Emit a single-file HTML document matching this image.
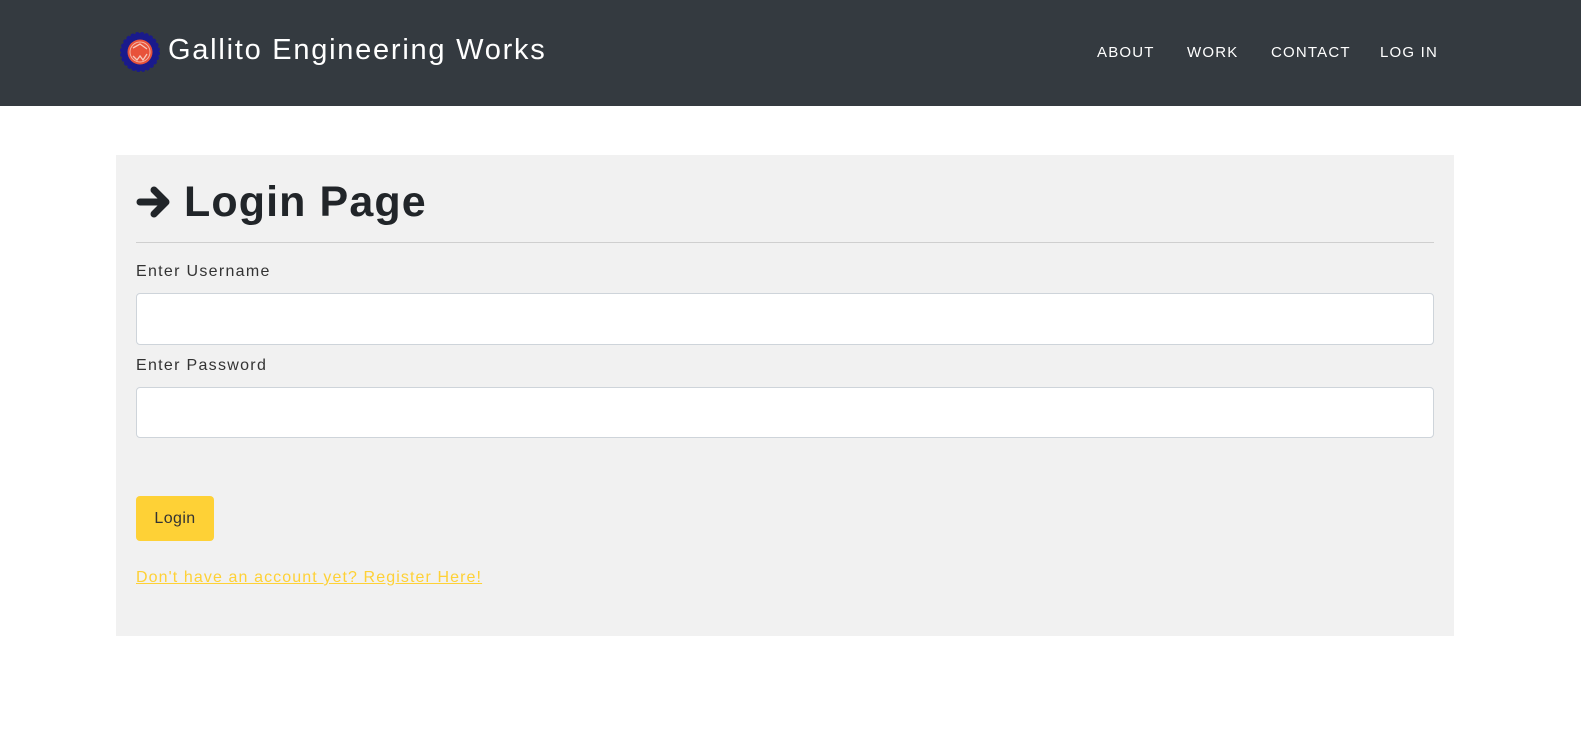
<!DOCTYPE html>
<html><head><style>
*{box-sizing:border-box;margin:0;padding:0}
body{width:1581px;height:750px;background:#fff;font-family:"Liberation Sans",sans-serif;position:relative;overflow:hidden}
.nav{position:absolute;left:0;top:0;width:1581px;height:106px;background:#343a40}
.brand{position:absolute;left:168px;top:34px;color:#fff;font-size:29px;letter-spacing:1.75px;white-space:nowrap}
.logo{position:absolute;left:120px;top:32px}
.links{position:absolute;top:44px;color:#fff;font-size:15px;letter-spacing:1.2px}
.card{position:absolute;left:116px;top:155px;width:1338px;height:481px;background:#f1f1f1}
h1{position:absolute;left:184px;top:178px;font-size:43px;font-weight:bold;color:#212529;letter-spacing:1.1px;white-space:nowrap}
.hr{position:absolute;left:136px;top:242px;width:1298px;height:1px;background:#cfcfcf}
.lbl{position:absolute;left:136px;font-size:16px;color:#333;letter-spacing:1.3px}
.inp{position:absolute;left:136px;width:1298px;background:#fff;border:1px solid #ced4da;border-radius:4px}
.btn{position:absolute;left:136px;top:496px;width:78px;height:45px;background:#fed136;border-radius:4px;font-size:16px;color:#333;text-align:center;line-height:45px;letter-spacing:0.4px}
.reg{position:absolute;left:136px;top:569px;font-size:16px;color:#fed136;text-decoration:underline;letter-spacing:1.1px}
</style></head><body>
<div class="nav">
<svg class="logo" width="40" height="40" viewBox="0 0 40 40">
<circle cx="20" cy="20" r="19" fill="#1a1a8c" stroke="#1a1a8c" stroke-width="2" stroke-dasharray="3 2"/>
<circle cx="20" cy="20" r="15" fill="#1a1a8c"/>
<circle cx="20" cy="20" r="12.5" fill="#e8523a"/>
<circle cx="20" cy="20" r="10" fill="none" stroke="#f5b5a5" stroke-width="1"/>
<path d="M13 16 L20 12 L27 17 M13 24 L17 28 L20 24 L23 28 L27 22" fill="none" stroke="#f7c9bc" stroke-width="1.3"/>
</svg>
<div class="brand">Gallito Engineering Works</div>
<div class="links" style="left:1097px">ABOUT</div>
<div class="links" style="left:1187px">WORK</div>
<div class="links" style="left:1271px">CONTACT</div>
<div class="links" style="left:1380px">LOG IN</div>
</div>
<div class="card"></div>
<svg style="position:absolute;left:136px;top:185px" width="36" height="34" viewBox="0 0 36 34"><path d="M4 17 H30 M18 5 L30 17 L18 29" fill="none" stroke="#212529" stroke-width="7" stroke-linecap="round" stroke-linejoin="round"/></svg>
<h1>Login Page</h1>
<div class="hr"></div>
<div class="lbl" style="top:263px">Enter Username</div>
<div class="inp" style="top:293px;height:52px"></div>
<div class="lbl" style="top:357px">Enter Password</div>
<div class="inp" style="top:387px;height:51px"></div>
<div class="btn">Login</div>
<div class="reg">Don't have an account yet? Register Here!</div>
</body></html>
